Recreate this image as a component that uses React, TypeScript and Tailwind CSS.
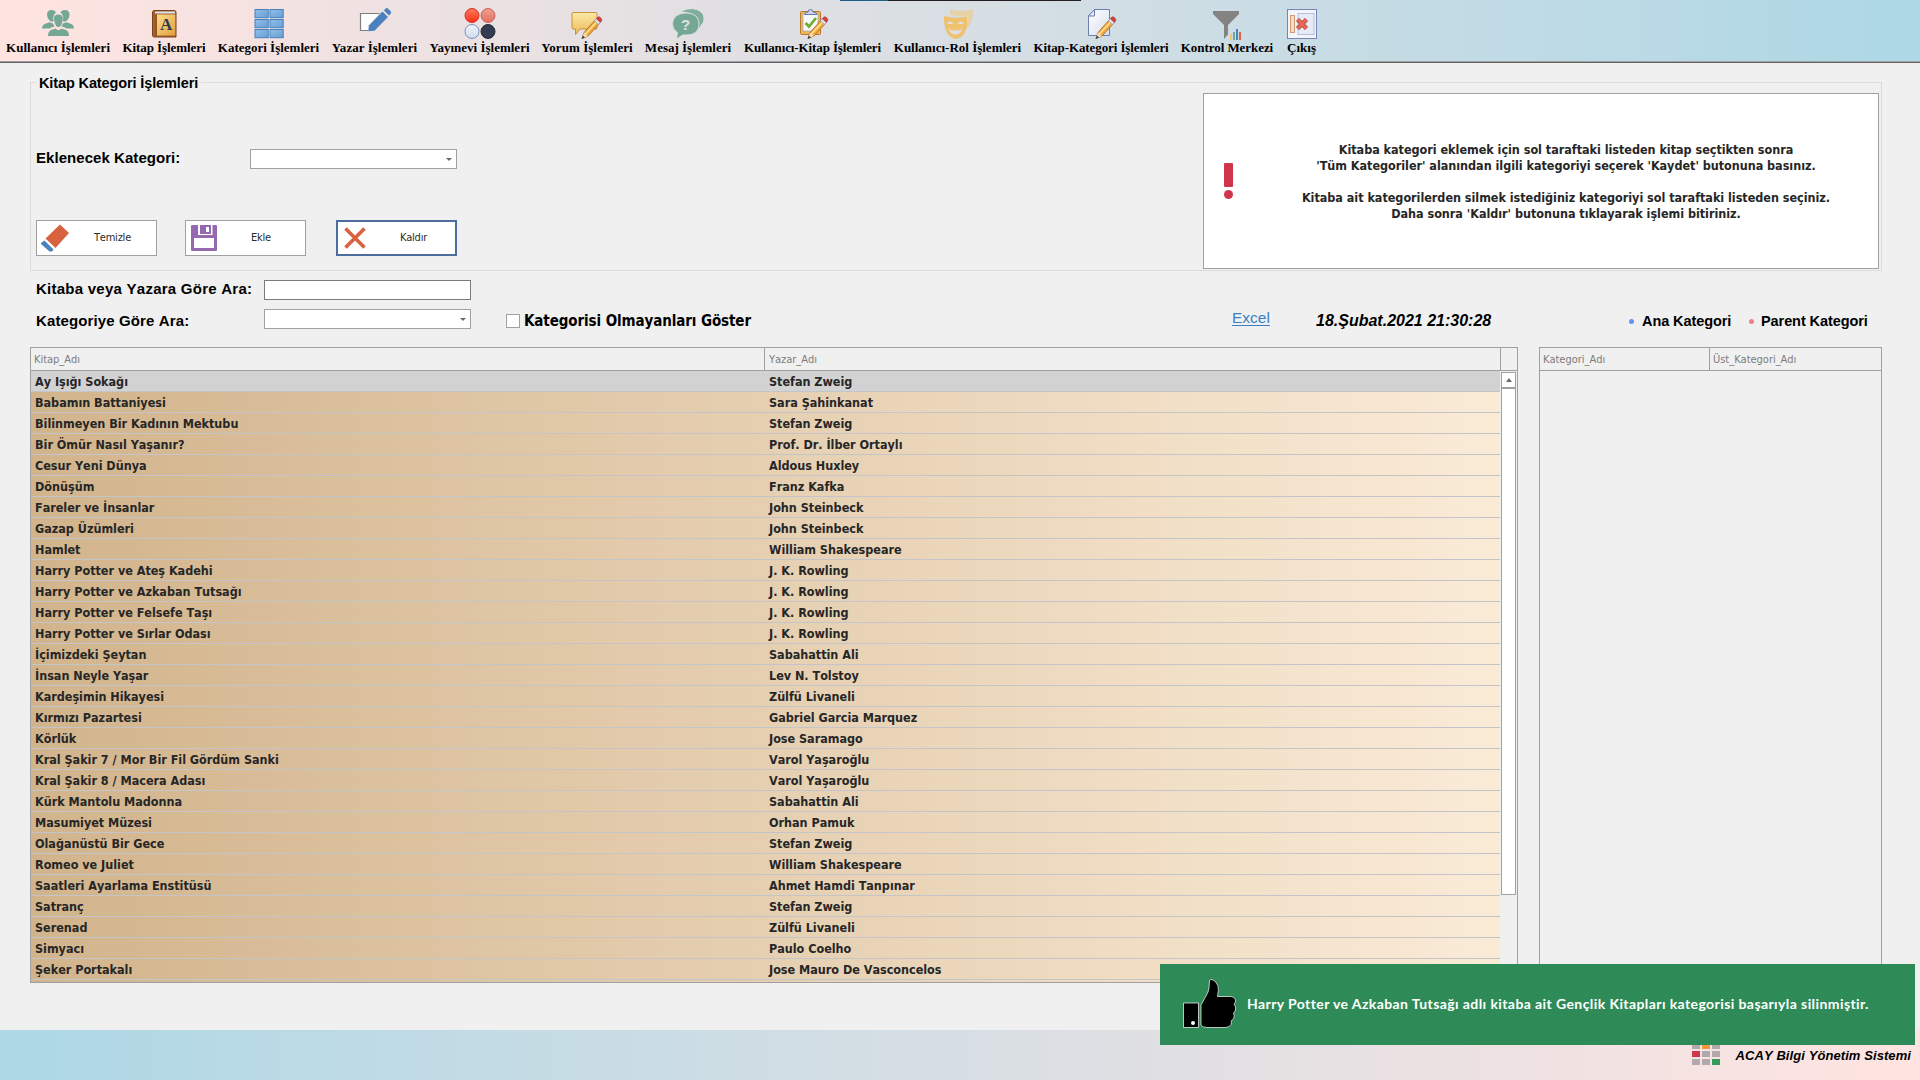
import React from "react";

const TAHOMA = "font-['DejaVu_Sans_Condensed','DejaVu_Sans',sans-serif] [font-stretch:condensed] [font-kerning:none]";
const ARIAL = "font-['Liberation_Sans',sans-serif] [font-kerning:none]";
const SERIF = "font-['Liberation_Serif',serif]";

const Svg = ({ children, className = "h-8 w-8", vb = "0 0 32 32" }: { children: React.ReactNode; className?: string; vb?: string }) => (
  <svg viewBox={vb} className={`shrink-0 ${className}`}>{children}</svg>
);

const Pencil = () => (
  <g>
    <path d="M11 31.5 L13 25.5 L25 12 L29 16 L17 29 Z" fill="#f0a83a" stroke="#a8661c" strokeWidth="0.8" />
    <path d="M14 27.5 L27 13.5" stroke="#fde39a" strokeWidth="1.6" />
    <path d="M23.5 13.5 L25.3 11.5 L29.3 15.5 L27.5 17.5 Z" fill="#dfe4ee" stroke="#8a93ab" strokeWidth="0.6" />
    <path d="M25.3 11.5 L27 10 Q28.2 9.4 29.4 10.6 L30.4 11.7 Q31.3 12.8 30.5 14 L29.3 15.5 Z" fill="#d8403a" stroke="#9b3440" strokeWidth="0.6" />
    <path d="M11 31.5 L13 25.5 L17 29 Z" fill="#f3dcb5" />
    <path d="M10.6 32 L11.8 28.6 L14 30.6 Z" fill="#383c4a" />
  </g>
);

const UsersIcon = () => (
  <Svg>
    <g fill="#74a895">
      <path d="M5 8 Q5 3 9.5 3 Q13 3 14 5.5 Q11 8 11.3 12 L11.6 14 Q9.5 15.5 7.6 13.5 Q5 11 5 8 Z" />
      <path d="M27.500 8 Q27.500 3 23 3 Q19.500 3 18.500 5.500 Q21.500 8 21.200 12 L20.900 14 Q23 15.500 24.900 13.500 Q27.500 11 27.500 8 Z" />
      <path d="M0 21.500 Q0 17.500 4 16.500 L7.500 15.300 L11 16.500 L12.500 19.500 Q9.500 20 7.500 21.500 Z" />
      <path d="M32 21.500 Q32 17.500 28 16.500 L24.500 15.300 L21 16.500 L19.500 19.500 Q22.500 20 24.500 21.500 Z" />
      <path d="M12 11.500 Q12 7.500 16.300 7.500 Q20.800 7.500 20.800 11.500 Q20.800 15.500 19 18.500 Q16.400 21.500 13.800 18.500 Q12 15.500 12 11.500 Z" />
      <path d="M6 29 Q6 24.500 9 23 L13.500 21.500 Q16.500 24.500 19.500 21.500 L24 23 Q27 24.500 27 29 Z" />
    </g>
  </Svg>
);

const BookIcon = () => (
  <Svg>
    <defs><linearGradient id="bk" x1="0" y1="0" x2="1" y2="1"><stop offset="0" stopColor="#fbdc8b" /><stop offset="1" stopColor="#e2a03c" /></linearGradient></defs>
    <path d="M5.500 3.500 H26.500 Q28 3.500 28 5.500 V30 H6 Q4.500 30 4.500 28 V5 Z" fill="#a4622c" stroke="#7b431c" />
    <path d="M7 4.500 H27 V6.500 H7 Z" fill="#dde2ee" />
    <rect x="9" y="7.500" width="18.300" height="21" fill="url(#bk)" />
    <path d="M8 8 V29" stroke="#87491e" strokeWidth="1" />
    <text x="18" y="23" textAnchor="middle" fontFamily="Liberation Serif" fontWeight="bold" fontSize="17" fill="#2f3b4c">A</text>
  </Svg>
);

const GridIcon = () => (
  <Svg>
    <defs><linearGradient id="gd" x1="0" y1="0" x2="1" y2="1"><stop offset="0" stopColor="#93bfe6" /><stop offset="1" stopColor="#649fd6" /></linearGradient></defs>
    {[2.500, 12.500, 22.500].map((y) => [2, 17].map((x) => (
      <rect key={`${x}-${y}`} x={x} y={y} width="13.200" height="8.200" fill="url(#gd)" stroke="#4580bd" />
    )))}
  </Svg>
);

const EditIcon = () => (
  <Svg>
    <path d="M1.500 23 L9 23 L9.500 19 L20 6.500 L1.500 6.500" fill="#fff" />
    <path d="M20.500 6.500 H1.500 V23.500 H9" fill="none" stroke="#7f7f7f" strokeWidth="1.200" />
    <path d="M10 18.300 L23.500 4.500 L29 10 L15.500 23.800 L9.300 24.200 Z" fill="#4b82bd" />
    <path d="M24.800 3.500 L27 1.300 Q28 0.600 29 1.500 L32 4.600 Q32.700 5.600 31.800 6.600 L30 8.600 Z" fill="#4b82bd" />
  </Svg>
);

const BallsIcon = () => (
  <Svg>
    <defs>
      <linearGradient id="b1" x1="0" y1="0" x2="0" y2="1"><stop offset="0" stopColor="#ff7a5c" /><stop offset="1" stopColor="#fb2f12" /></linearGradient>
      <linearGradient id="b2" x1="0" y1="0" x2="0" y2="1"><stop offset="0" stopColor="#f0a090" /><stop offset="1" stopColor="#e36f60" /></linearGradient>
      <linearGradient id="b3" x1="0" y1="0" x2="0" y2="1"><stop offset="0" stopColor="#f1f4fa" /><stop offset="1" stopColor="#cfdcec" /></linearGradient>
    </defs>
    <circle cx="8" cy="8.500" r="7" fill="url(#b1)" stroke="#cf3428" />
    <circle cx="24" cy="8.500" r="7" fill="url(#b2)" stroke="#d0605c" />
    <circle cx="8" cy="24.500" r="7" fill="url(#b3)" stroke="#7f8fc0" />
    <circle cx="24" cy="24.500" r="7" fill="#333c50" stroke="#232a3a" />
  </Svg>
);

const CommentIcon = () => (
  <Svg>
    <defs><linearGradient id="cm" x1="0" y1="0" x2="0" y2="1"><stop offset="0" stopColor="#fde9a6" /><stop offset="1" stopColor="#ecb95a" /></linearGradient></defs>
    <path d="M2 5.500 H25 Q26 5.500 26 6.500 V21 Q26 22 25 22 H9 L4.500 27.500 V22 H2 Q1 22 1 21 V6.500 Q1 5.500 2 5.500 Z" fill="url(#cm)" stroke="#c8913a" />
    <Pencil />
  </Svg>
);

const HelpIcon = () => (
  <Svg>
    <path d="M9.500 4.500 Q14 2 20 2 Q31.500 3 31.500 11.500 Q31.500 16.500 28.200 18.500 L28.200 21 L26.800 19.800 Q30 6 9.500 4.500 Z" fill="#7fae9c" />
    <path d="M14 6 Q27 6.500 27 17 Q27 28 14 28 L11 27.800 L4.500 32 L5.500 25.500 Q0.500 22 0.500 17 Q1 6.500 14 6 Z" fill="#74a895" stroke="#e3e0e4" strokeWidth="0.800" />
    <text x="13.500" y="22.500" textAnchor="middle" fontFamily="Liberation Sans" fontWeight="bold" fontSize="15" fill="#e3e0e4">?</text>
  </Svg>
);

const ClipboardIcon = () => (
  <Svg>
    <rect x="3.500" y="4.500" width="20" height="23" rx="1" fill="#eeb65c" stroke="#b97a2a" />
    <path d="M6 7 H21 V24 H6 Z" fill="#f6f8fd" stroke="#9aa6c4" strokeWidth="0.700" />
    <path d="M7.500 7.500 Q8 5 11 5 Q11 2.500 13.500 2.500 Q16 2.500 16 5 Q19.500 5 20 7.500 Z" fill="#c9d4ea" stroke="#5f71a2" strokeWidth="0.900" />
    <path d="M8.500 16 L12 19.500 L19 11" fill="none" stroke="#6fae25" strokeWidth="2.600" />
    <Pencil />
  </Svg>
);

const MasksIcon = () => (
  <Svg>
    <path d="M8 2.500 Q19 5 31 2.300 Q31.500 17 24 22 L21.500 21.500 Q26.500 15 26 9 Q17 10 8.500 8 Z" fill="#e6d2a8" />
    <path d="M2 9 Q13 12 25 9.500 Q26.500 30 14 32 Q1.500 30 2 9 Z" fill="#efc270" />
    <path d="M5 16.500 Q8 12.500 11.500 16.500 Q8 17.500 5 16.500 Z M15.500 16.500 Q18.500 12.500 22 16.500 Q18.500 17.500 15.500 16.500 Z" fill="#e0dee2" />
    <path d="M6.500 22 Q13 25 20 22 Q18.500 27.500 13.500 27.500 Q8.500 27.500 6.500 22 Z" fill="#e0dee2" />
  </Svg>
);

const PageIcon = () => (
  <Svg>
    <defs><linearGradient id="pg" x1="0" y1="0" x2="1" y2="1"><stop offset="0" stopColor="#ffffff" /><stop offset="1" stopColor="#d6deef" /></linearGradient></defs>
    <path d="M9.500 2.500 H24.500 V28.500 H3.500 V9 Z" fill="url(#pg)" stroke="#6d7fb3" />
    <path d="M3.500 9 H9.500 V2.500 Z" fill="#e7ecf7" stroke="#6d7fb3" />
    <Pencil />
  </Svg>
);

const FunnelIcon = () => (
  <Svg className="h-8 w-8 overflow-visible">
    <path d="M2 4 H28 V7 L17 18 V27.500 L13 32 V18 L2 7 Z" fill="#838383" />
    <rect x="19" y="27" width="2" height="6" fill="#f2c46a" />
    <rect x="22" y="25" width="2" height="8" fill="#74a895" />
    <rect x="25" y="22" width="2" height="11" fill="#4b82bd" />
    <rect x="28" y="25" width="2" height="8" fill="#d9653f" />
  </Svg>
);

const ExitIcon = () => (
  <Svg>
    <rect x="1.500" y="2.500" width="29" height="29" fill="#f3f5fb" stroke="#7485b5" />
    <rect x="12" y="6.500" width="16" height="21" fill="#e6ebf6" stroke="#b5c0da" />
    <rect x="4.500" y="8.500" width="4" height="17" fill="#f3dcc6" stroke="#cf9a72" />
    <path d="M11.500 12.500 L20.500 21.500 M20.500 12.500 L11.500 21.500" stroke="#b53a36" strokeWidth="4.400" />
    <path d="M11.800 12.800 L20.200 21.200 M20.200 12.800 L11.800 21.200" stroke="#e8695a" strokeWidth="2.800" />
  </Svg>
);

const menu: { label: string; width: string; icon: React.ReactNode }[] = [
  { label: "Kullanıcı İşlemleri", width: "w-[104px] tracking-[0.02px]", icon: <UsersIcon /> },
  { label: "Kitap İşlemleri", width: "w-[82px] tracking-[-0.08px]", icon: <BookIcon /> },
  { label: "Kategori İşlemleri", width: "w-[101px]", icon: <GridIcon /> },
  { label: "Yazar İşlemleri", width: "w-[85px] tracking-[0.05px]", icon: <EditIcon /> },
  { label: "Yayınevi İşlemleri", width: "w-[99px]", icon: <BallsIcon /> },
  { label: "Yorum İşlemleri", width: "w-[90px] tracking-[0.05px]", icon: <CommentIcon /> },
  { label: "Mesaj İşlemleri", width: "w-[86px]", icon: <HelpIcon /> },
  { label: "Kullanıcı-Kitap İşlemleri", width: "w-[137px] tracking-[-0.11px]", icon: <ClipboardIcon /> },
  { label: "Kullanıcı-Rol İşlemleri", width: "w-[127px]", icon: <MasksIcon /> },
  { label: "Kitap-Kategori İşlemleri", width: "w-[134px] tracking-[-0.1px]", icon: <PageIcon /> },
  { label: "Kontrol Merkezi", width: "w-[92px] tracking-[-0.06px]", icon: <FunnelIcon /> },
  { label: "Çıkış", width: "w-[31px]", icon: <ExitIcon /> },
];

const books: [string, string][] = [
  ["Ay Işığı Sokağı", "Stefan Zweig"],
  ["Babamın Battaniyesi", "Sara Şahinkanat"],
  ["Bilinmeyen Bir Kadının Mektubu", "Stefan Zweig"],
  ["Bir Ömür Nasıl Yaşanır?", "Prof. Dr. İlber Ortaylı"],
  ["Cesur Yeni Dünya", "Aldous Huxley"],
  ["Dönüşüm", "Franz Kafka"],
  ["Fareler ve İnsanlar", "John Steinbeck"],
  ["Gazap Üzümleri", "John Steinbeck"],
  ["Hamlet", "William Shakespeare"],
  ["Harry Potter ve Ateş Kadehi", "J. K. Rowling"],
  ["Harry Potter ve Azkaban Tutsağı", "J. K. Rowling"],
  ["Harry Potter ve Felsefe Taşı", "J. K. Rowling"],
  ["Harry Potter ve Sırlar Odası", "J. K. Rowling"],
  ["İçimizdeki Şeytan", "Sabahattin Ali"],
  ["İnsan Neyle Yaşar", "Lev N. Tolstoy"],
  ["Kardeşimin Hikayesi", "Zülfü Livaneli"],
  ["Kırmızı Pazartesi", "Gabriel Garcia Marquez"],
  ["Körlük", "Jose Saramago"],
  ["Kral Şakir 7 / Mor Bir Fil Gördüm Sanki", "Varol Yaşaroğlu"],
  ["Kral Şakir 8 / Macera Adası", "Varol Yaşaroğlu"],
  ["Kürk Mantolu Madonna", "Sabahattin Ali"],
  ["Masumiyet Müzesi", "Orhan Pamuk"],
  ["Olağanüstü Bir Gece", "Stefan Zweig"],
  ["Romeo ve Juliet", "William Shakespeare"],
  ["Saatleri Ayarlama Enstitüsü", "Ahmet Hamdi Tanpınar"],
  ["Satranç", "Stefan Zweig"],
  ["Serenad", "Zülfü Livaneli"],
  ["Simyacı", "Paulo Coelho"],
  ["Şeker Portakalı", "Jose Mauro De Vasconcelos"],
];

const Combo = () => (
  <div className="flex h-5 w-[207px] items-center justify-end border border-[#a0a0a0] bg-white pr-1">
    <svg viewBox="0 0 6 3" className="mt-px h-[3px] w-[6px]"><path d="M0 0 H6 L3 3 Z" fill="#6b6b6b" /></svg>
  </div>
);

function Toolbar() {
  return (
    <header className="relative flex h-[63px] gap-[13px] border-b border-[#646464] bg-linear-to-r from-[#ffe4e1] to-[#add8e6] pt-[7px] pl-[6px] shadow-[inset_0_-1px_0_#a0a0a0]">
      {menu.map((m) => (
        <div key={m.label} className={`flex shrink-0 flex-col items-center ${m.width}`}>
          {m.icon}
          <span className={`text-[13px] leading-[17px] font-bold whitespace-nowrap text-black ${SERIF}`}>{m.label}</span>
        </div>
      ))}
      <div className="absolute top-0 left-[840px] flex h-px w-[241px]">
        <div className="w-12 bg-[#1f5f8b]" />
        <div className="flex-1 bg-[#231f20]" />
      </div>
    </header>
  );
}

function ActionButton({ label, icon, active }: { label: string; icon: React.ReactNode; active?: boolean }) {
  return (
    <button className={`flex h-9 w-[121px] items-center bg-white ${active ? "border-2 border-[#4d6d9f] pl-[3px]" : "border border-[#a0a0a0] pl-1"}`}>
      {icon}
      <span className={`flex-1 pt-px text-center text-[11px] tracking-[-0.22px] text-[#2b2b2b] ${active ? "pl-[6px]" : "pl-0"} ${TAHOMA}`}>{label}</span>
    </button>
  );
}

function CategoryPanel() {
  return (
    <section className="mt-[19px] ml-[30px] flex h-[189px] w-[1852px] justify-between border border-[#dcdcdc] pr-[2px]">
      <div className="flex flex-col pl-[5px]">
        <h2 className={`-mt-[10px] h-5 w-[165px] bg-[#f0f0f0] pl-[3px] text-[14.500px] leading-5 font-bold tracking-[-0.12px] whitespace-nowrap text-black ${ARIAL}`}>Kitap Kategori İşlemleri</h2>
        <div className="mt-14 flex">
          <label className={`w-[214px] text-[15px] leading-[18px] font-bold tracking-[0.05px] text-black ${ARIAL}`}>Eklenecek Kategori:</label>
          <Combo />
        </div>
        <div className="mt-[51px] flex">
          <ActionButton label="Temizle" icon={
            <Svg className="h-7 w-7" vb="0 0 28 28">
              <path d="M19 0.500 L28 9 L14.500 24 L4.500 14.500 Z" fill="#d8623f" />
              <path d="M3.500 16.500 L12.500 25.500 L11 27.500 H8.500 L0 20 V19 Z" fill="#4b82bd" />
            </Svg>} />
          <div className="w-7" />
          <ActionButton label="Ekle" icon={
            <Svg className="ml-px h-[26px] w-[26px]" vb="0 0 26 26">
              <path d="M1 0 H7 V10 H21.500 V0 H25 Q26 0 26 1 V25 Q26 26 25 26 H1 Q0 26 0 25 V1 Q0 0 1 0 Z M3 13 V23 H23 V13 Z" fill="#9469b0" fillRule="evenodd" />
              <path d="M9 0 H20 V9 H9 Z M15 2 V7 H18 V2 Z" fill="#9469b0" fillRule="evenodd" />
            </Svg>} />
          <div className="w-[30px]" />
          <ActionButton active label="Kaldır" icon={
            <Svg className="-mt-px ml-[3px] h-[22px] w-[22px]" vb="0 0 22 22">
              <path d="M1.500 1.500 L20.500 20.500 M20.500 1.500 L1.500 20.500" stroke="#d8623f" strokeWidth="3.600" />
            </Svg>} />
        </div>
      </div>
      <div className={`mt-[10px] flex h-[176px] w-[676px] items-center border border-[#a0a0a0] bg-white text-[#262626] ${TAHOMA}`}>
        <Svg className="ml-[20px] h-9 w-[9px]" vb="0 0 9 36">
          <rect width="9" height="24" rx="1" fill="#d0364b" />
          <ellipse cx="4.500" cy="31.500" rx="4.500" ry="4.500" fill="#d0364b" />
        </Svg>
        <p className="ml-[21px] flex-1 pt-[2px] text-center text-[12.500px] leading-4 font-bold tracking-[-0.03px] whitespace-pre-line">
          {"Kitaba kategori eklemek için sol taraftaki listeden kitap seçtikten sonra\n'Tüm Kategoriler' alanından ilgili kategoriyi seçerek 'Kaydet' butonuna basınız.\n\nKitaba ait kategorilerden silmek istediğiniz kategoriyi sol taraftaki listeden seçiniz.\nDaha sonra 'Kaldır' butonuna tıklayarak işlemi bitiriniz."}
        </p>
      </div>
    </section>
  );
}

function Filters() {
  return (
    <section className={`mt-[9px] ml-[36px] flex h-[67px] text-[15px] leading-[18px] text-black ${ARIAL}`}>
      <div className="flex w-[435px] flex-col gap-[9px]">
        <div className="flex">
          <label className="w-[228px] font-bold tracking-[0.25px]">Kitaba veya Yazara Göre Ara:</label>
          <input className="h-5 w-[207px] border border-[#7a7a7a] bg-white" />
        </div>
        <div className="flex">
          <label className="w-[228px] pt-[3px] font-bold tracking-[0.12px]">Kategoriye Göre Ara:</label>
          <Combo />
        </div>
      </div>
      <div className="mt-[32px] ml-[35px] flex h-[18px] w-[726px] items-center">
        <span className="-mt-px h-[14px] w-[14px] border border-[#a0a0a0] bg-white" />
        <span className={`ml-1 text-[15px] leading-5 font-bold tracking-[-0.1px] whitespace-nowrap ${TAHOMA}`}>Kategorisi Olmayanları Göster</span>
      </div>
      <a className="mt-[29px] w-[84px] text-[15.500px] text-[#3d7fc6] underline underline-offset-2">Excel</a>
      <time className="mt-[32px] w-[311px] text-[16px] leading-[18px] font-bold whitespace-nowrap italic">18.Şubat.2021 21:30:28</time>
      <div className="mt-[32px] flex h-[18px] items-center text-[14.500px] font-bold tracking-[-0.08px] whitespace-nowrap">
        <span className="mr-2 ml-[2px] h-[5px] w-[5px] rounded-full bg-[#6495ed]" />
        <span className="w-[107px]">Ana Kategori</span>
        <span className="mr-[7px] h-[5px] w-[5px] rounded-full bg-[#f08080]" />
        <span>Parent Kategori</span>
      </div>
    </section>
  );
}

const head = `flex h-[23px] shrink-0 border-b border-[#a0a0a0] text-[11px] leading-[23px] tracking-[-0.02px] text-[#7c7c7c] ${TAHOMA}`;

function BookTable() {
  return (
    <div className="flex h-[636px] w-[1488px] flex-col overflow-hidden border border-[#a0a0a0]">
      <div className={head}>
        <div className="w-[734px] border-r border-[#a0a0a0] pl-[3px]">Kitap_Adı</div>
        <div className="w-[736px] border-r border-[#a0a0a0] pl-[4px]">Yazar_Adı</div>
      </div>
      <div className="flex min-h-0 flex-1">
        <div className={`w-[1469px] overflow-hidden bg-linear-to-r from-[#d2b48c] to-[#faebd7] text-[12.500px] leading-[22px] font-bold tracking-[-0.02px] text-[#262626] ${TAHOMA}`}>
          {books.map(([book, author], i) => (
            <div key={book} className={`flex h-[21px] border-b border-[#c4c5c8] ${i === 0 ? "bg-[#d2d2d2]" : ""}`}>
              <span className="w-[734px] pl-1">{book}</span>
              <span className="pl-[4px]">{author}</span>
            </div>
          ))}
        </div>
        <div className="flex w-4 flex-col pt-px pl-px">
          <div className="flex h-4 w-[15px] items-center justify-center border border-[#a0a0a0] bg-white">
            <svg viewBox="0 0 6 4" className="h-1 w-[6px]"><path d="M0 4 H6 L3 0 Z" fill="#6b6b6b" /></svg>
          </div>
          <div className="h-[507px] w-[15px] border border-[#a0a0a0] bg-white" />
        </div>
      </div>
    </div>
  );
}

function CategoryTable() {
  return (
    <div className="h-[636px] w-[343px] border border-[#a0a0a0]">
      <div className={head}>
        <div className="w-[170px] border-r border-[#a0a0a0] pl-[3px]">Kategori_Adı</div>
        <div className="pl-[3px]">Üst_Kategori_Adı</div>
      </div>
    </div>
  );
}

function Toast() {
  return (
    <div className="absolute top-[964px] left-[1160px] flex h-[81px] w-[755px] items-center bg-[#2e8b57] text-white">
      <Svg className="-mt-[2px] ml-[23px] h-[50px] w-[54px]" vb="0 0 54 50">
        <g fill="#000" stroke="#fff" strokeWidth="0.700">
          <path d="M0.500 24 H15.500 V48.500 H0.500 Z" />
          <path d="M18 26 L23 17 Q25.500 13 26 9 L26.500 1.500 Q27 0.500 29 0.500 Q33 1.500 35 7 Q36 11 34.500 17.500 H48 Q53 18.500 52.500 22.500 Q52 24.500 51 25 Q53.500 28 52.500 31 Q51.500 33.500 50.500 34 Q52 37 50.500 39.500 Q49.500 41 48.500 41.500 Q49 46 46 47.500 Q45 48.500 41 48.500 H24 Q19 48.500 18 46 Z" />
        </g>
        <circle cx="10" cy="44" r="2" fill="#fff" />
      </Svg>
      <span className="-mt-[2px] ml-[10px] font-['Lato',sans-serif] text-[14px] font-bold tracking-[0.41px] whitespace-nowrap">Harry Potter ve Azkaban Tutsağı adlı kitaba ait Gençlik Kitapları kategorisi başarıyla silinmiştir.</span>
    </div>
  );
}

function Footer() {
  const tiles = ["bg-[#b1a9ac]", "bg-[#f4983b]", "bg-[#b1a9ac]", "bg-[#d0364b]", "bg-[#b1a9ac]", "bg-[#b1a9ac]", "bg-[#b1a9ac]", "bg-[#b1a9ac]", "bg-[#35995a]"];
  return (
    <footer className="mt-[47px] flex h-[50px] justify-end bg-linear-to-r from-[#add8e6] to-[#ffe4e1] pr-[9px]">
      <div className="mt-[13px] mr-4 grid h-[22px] grid-cols-[8px_8px_8px] grid-rows-[6px_6px_6px] gap-x-[2px] gap-y-[2px]">
        {tiles.map((c, i) => <div key={i} className={c} />)}
      </div>
      <span className={`mt-[17px] text-[13px] leading-[18px] font-bold tracking-[0.08px] whitespace-nowrap text-black italic ${ARIAL}`}>ACAY Bilgi Yönetim Sistemi</span>
    </footer>
  );
}

export default function App() {
  return (
    <div className="relative h-[1080px] w-[1920px] overflow-hidden bg-[#f0f0f0]">
      <Toolbar />
      <CategoryPanel />
      <Filters />
      <main className="ml-[30px] flex gap-[21px]">
        <BookTable />
        <CategoryTable />
      </main>
      <Footer />
      <Toast />
    </div>
  );
}
